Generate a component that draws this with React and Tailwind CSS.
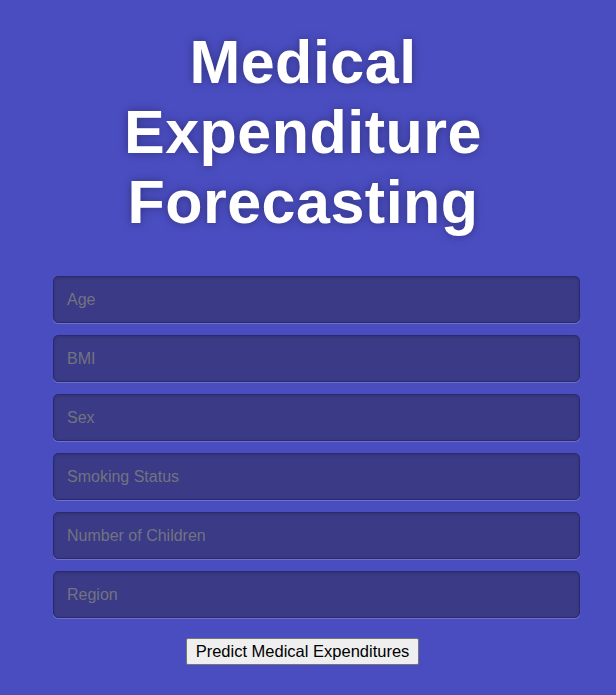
export default function App() {
  const fields = ['Age', 'BMI', 'Sex', 'Smoking Status', 'Number of Children', 'Region']

  return (
    <div className="min-h-[695px] bg-[#4a4dc0] font-['Liberation_Sans',Arial,sans-serif]">
      <div className="pt-[27px] pr-[10px]">
        <h1 className="text-center text-[61px] leading-[70px] tracking-[0.5px] font-bold text-white [text-shadow:0_0_10px_rgba(0,0,0,0.35)]">
          Medical<br />Expenditure<br />Forecasting
        </h1>
      </div>

      <form className="mt-[39px] pl-[53px] pr-[36px] flex flex-col gap-[12px]" onSubmit={(e) => e.preventDefault()}>
        {fields.map((f) => (
          <input
            key={f}
            type="text"
            placeholder={f}
            className="h-[47px] w-full rounded-[5px] border border-[#2a2a6e] bg-[#3a3a86] px-[13px] text-[16px] text-white placeholder:text-[#737380] shadow-[0_1px_0_rgba(255,255,255,0.2),inset_0_1px_3px_rgba(0,0,0,0.15)] outline-none"
          />
        ))}
        <div className="flex justify-center pt-[8px] pr-[28px]">
          <button
            type="submit"
            className="h-[27px] px-[9px] bg-[#efefef] border border-[#767676] rounded-[2px] text-[16.5px] text-black"
          >
            Predict Medical Expenditures
          </button>
        </div>
      </form>
    </div>
  )
}
